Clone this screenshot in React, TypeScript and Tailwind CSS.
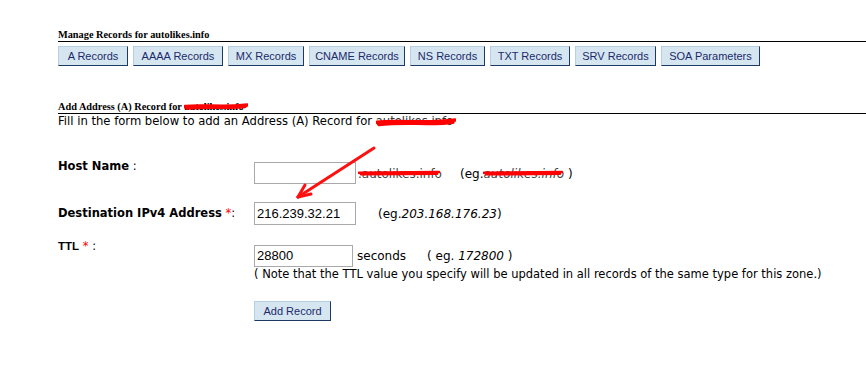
import React from "react";

const serif = { fontFamily: '"Liberation Serif", "Times New Roman", serif' };

function Scribble({ w, h, variant = 0 }: { w: number; h: number; variant?: number }) {
  return (
    <svg
      className="absolute left-0 top-0 pointer-events-none"
      width={w}
      height={h}
      viewBox={`0 0 ${w} ${h}`}
    >
      {variant === 0 ? (
        <g stroke="#ff0000" strokeWidth={3.4} fill="none" strokeLinecap="round">
          <path d={`M1 ${h * 0.55} C ${w * 0.3} ${h * 0.35}, ${w * 0.6} ${h * 0.7}, ${w - 1} ${h * 0.4}`} />
          <path d={`M3 ${h * 0.7} C ${w * 0.35} ${h * 0.5}, ${w * 0.7} ${h * 0.75}, ${w - 3} ${h * 0.55}`} />
        </g>
      ) : (
        <g stroke="#ff0000" strokeWidth={2.6} fill="none" strokeLinecap="round">
          <path d={`M1 ${h * 0.52} L ${w - 1} ${h * 0.47}`} />
          <path d={`M3 ${h * 0.62} L ${w - 3} ${h * 0.58}`} />
        </g>
      )}
    </svg>
  );
}

const buttons: [string, string][] = [
  ["A Records", "w-[70px]"],
  ["AAAA Records", "w-[90px]"],
  ["MX Records", "w-[76px]"],
  ["CNAME Records", "w-[96px]"],
  ["NS Records", "w-[75px]"],
  ["TXT Records", "w-[80px]"],
  ["SRV Records", "w-[81px]"],
  ["SOA Parameters", "w-[99px]"],
];

function Btn({ label, cls }: { label: string; cls: string }) {
  return (
    <div
      className={`${cls} shrink-0 h-[20px] flex items-center justify-center bg-[#d6e6f1] border border-t-[#b7cfe2] border-l-[#b7cfe2] border-r-[#1d3a62] border-b-[#1d3a62] text-[#1b2a6b] text-[11px] leading-none whitespace-nowrap`}
      style={{ fontFamily: '"Liberation Sans", Arial, sans-serif' }}
    >
      {label}
    </div>
  );
}

export default function App() {
  const verdana = { fontFamily: '"DejaVu Sans", Verdana, sans-serif' };
  const arial = { fontFamily: '"Liberation Sans", Arial, sans-serif' };
  return (
    <div className="relative w-[866px] h-[389px] bg-white overflow-hidden text-black">
      <div className="pt-[29px] pl-[58px]">
        <div className="text-[10.3px] font-bold leading-[12px] h-[12px]" style={serif}>
          Manage Records for autolikes.info
        </div>
        <div className="border-t border-black" />
        <div className="flex gap-[5px] mt-[4px]">
          {buttons.map(([l, c]) => (
            <Btn key={l} label={l} cls={c} />
          ))}
        </div>

        <div className="mt-[35px] text-[10.3px] font-bold leading-[12px] h-[12px]" style={serif}>
          Add Address (A) Record for{" "}
          <span className="relative inline-block">
            autolikes.info
            <Scribble w={64} h={10} />
          </span>
        </div>
        <div className="border-t border-black" />
        <div className="text-[11.6px] leading-[15px]" style={verdana}>
          Fill in the form below to add an Address (A) Record for{" "}
          <span className="relative inline-block text-[#333]">
            autolikes.info
            <Scribble w={80} h={15} />
          </span>
        </div>

        {/* Host Name row */}
        <div className="flex items-start mt-[33px]">
          <div className="w-[196px] text-[11.5px] leading-[16px] -mt-[4px]" style={verdana}>
            <span className="font-bold">Host Name</span> :
          </div>
          <div className="w-[102px] h-[22px] border border-[#a9a9a9]" />
          <div className="flex items-center h-[22px] mt-[1px] text-[12px]" style={verdana}>
            <span className="relative inline-block ml-[2px] text-[#444]">
              .autolikes.info
              <Scribble w={82} h={15} variant={1} />
            </span>
            <span className="ml-[18px]">
              (eg.
              <span className="relative inline-block italic text-[#444]">
                autolikes.info
                <Scribble w={80} h={15} variant={1} />
              </span>
              {" "})
            </span>
          </div>
        </div>

        {/* Destination row */}
        <div className="flex items-start mt-[17px]">
          <div className="w-[196px] text-[11.5px] leading-[16px] mt-[3px]" style={verdana}>
            <span className="font-bold">Destination IPv4 Address</span>{" "}
            <span className="text-[#ff0000]">*</span>:
          </div>
          <div
            className="w-[102px] h-[23px] border border-[#a9a9a9] flex items-center pl-[2px] text-[13px]"
            style={arial}
          >
            216.239.32.21
          </div>
          <div className="ml-[22px] h-[23px] flex items-center text-[12px]" style={verdana}>
            (eg.<span className="italic">203.168.176.23</span>)
          </div>
        </div>

        {/* TTL row */}
        <div className="flex items-start mt-[20px]">
          <div className="w-[196px] text-[11.5px] leading-[16px] -mt-[7px]" style={verdana}>
            <span className="font-bold" style={arial}>
              TTL
            </span>{" "}
            <span className="text-[#ff0000]">*</span> :
          </div>
          <div>
            <div className="flex items-center">
              <div
                className="w-[99px] h-[22px] border border-[#a9a9a9] flex items-center pl-[2px] text-[13px]"
                style={arial}
              >
                28800
              </div>
              <span className="ml-[4px] text-[12px]" style={verdana}>
                seconds
              </span>
              <span className="ml-[21px] text-[12px]" style={verdana}>
                ( eg. <span className="italic">172800</span> )
              </span>
            </div>
            <div className="text-[11.5px] leading-[12px] mt-[1px]" style={verdana}>
              ( Note that the TTL value you specify will be updated in all records of the same type for this zone.)
            </div>
            <div className="mt-[21px]">
              <Btn label="Add Record" cls="w-[77px]" />
            </div>
          </div>
        </div>
      </div>

      {/* red arrow overlay */}
      <svg className="absolute left-0 top-0 pointer-events-none" width={866} height={389}>
        <g stroke="#ff1010" strokeWidth={3} fill="none" strokeLinecap="round" strokeLinejoin="round">
          <path d="M374 148 L298 197" />
          <path d="M298 197 L305 185" />
          <path d="M298 197 L311 194" />
        </g>
      </svg>
    </div>
  );
}
